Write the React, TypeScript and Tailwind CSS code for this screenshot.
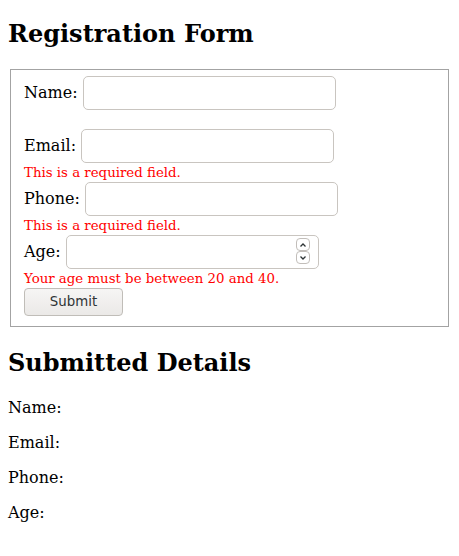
import type { ReactNode } from "react";

function Field({ label, children }: { label: string; children: ReactNode }) {
  return (
    <div className="flex h-[34px] items-center">
      <label className="whitespace-pre">{label} </label>
      {children}
    </div>
  );
}

function TextBox() {
  return (
    <input
      type="text"
      className="h-[34px] w-[253px] rounded-[5px] border border-[#c9c5c0] bg-white px-2 outline-none"
    />
  );
}

function Spinner() {
  return (
    <div className="pointer-events-none absolute right-[9px] top-[3px] flex flex-col">
      <span className="flex h-[13px] w-[14px] items-center justify-center rounded-[4px] border border-[#c2beba] bg-white">
        <svg width="8" height="6" viewBox="0 0 8 6">
          <path d="M1.5 4.5 L4 2 L6.5 4.5" fill="none" stroke="#2e3436" strokeWidth="1.3" />
        </svg>
      </span>
      <span className="flex h-[13px] w-[14px] items-center justify-center rounded-[4px] border border-[#c2beba] bg-white">
        <svg width="8" height="6" viewBox="0 0 8 6">
          <path d="M1.5 1.5 L4 4 L6.5 1.5" fill="none" stroke="#2e3436" strokeWidth="1.3" />
        </svg>
      </span>
    </div>
  );
}

function ErrorLine({ children }: { children?: ReactNode }) {
  return <div className="h-[19px] text-[13.33px] leading-[19px] text-[#ff0000]">{children}</div>;
}

export default function App() {
  return (
    <div className="min-h-[556px] bg-white px-2 font-['DejaVu_Serif',serif] text-[16px] text-black">
      <h2 className="pt-5 text-[24px] font-bold leading-[28px]">Registration Form</h2>

      <form
        className="mx-[2px] mt-[21px] border border-[#a3a3a3] px-[13px] pb-[10px] pt-[6px]"
        onSubmit={(e) => e.preventDefault()}
      >
        <Field label="Name:">
          <TextBox />
        </Field>
        <ErrorLine />

        <Field label="Email:">
          <TextBox />
        </Field>
        <ErrorLine>This is a required field.</ErrorLine>

        <Field label="Phone:">
          <TextBox />
        </Field>
        <ErrorLine>This is a required field.</ErrorLine>

        <Field label="Age:">
          <div className="relative">
            <TextBox />
            <Spinner />
          </div>
        </Field>
        <ErrorLine>Your age must be between 20 and 40.</ErrorLine>

        <button
          type="submit"
          className="h-[28px] w-[99px] rounded-[4px] border border-[#c0bdb8] bg-gradient-to-b from-[#f6f5f4] to-[#ebe9e7] font-['DejaVu_Sans',sans-serif] text-[13.33px] text-[#2e3436]"
        >
          Submit
        </button>
      </form>

      <h2 className="mt-[22px] text-[24px] font-bold leading-[28px]">Submitted Details</h2>
      <div className="mt-[21px] flex flex-col gap-4 leading-[19px]">
        <p>Name: </p>
        <p>Email: </p>
        <p>Phone: </p>
        <p>Age: </p>
      </div>
    </div>
  );
}
